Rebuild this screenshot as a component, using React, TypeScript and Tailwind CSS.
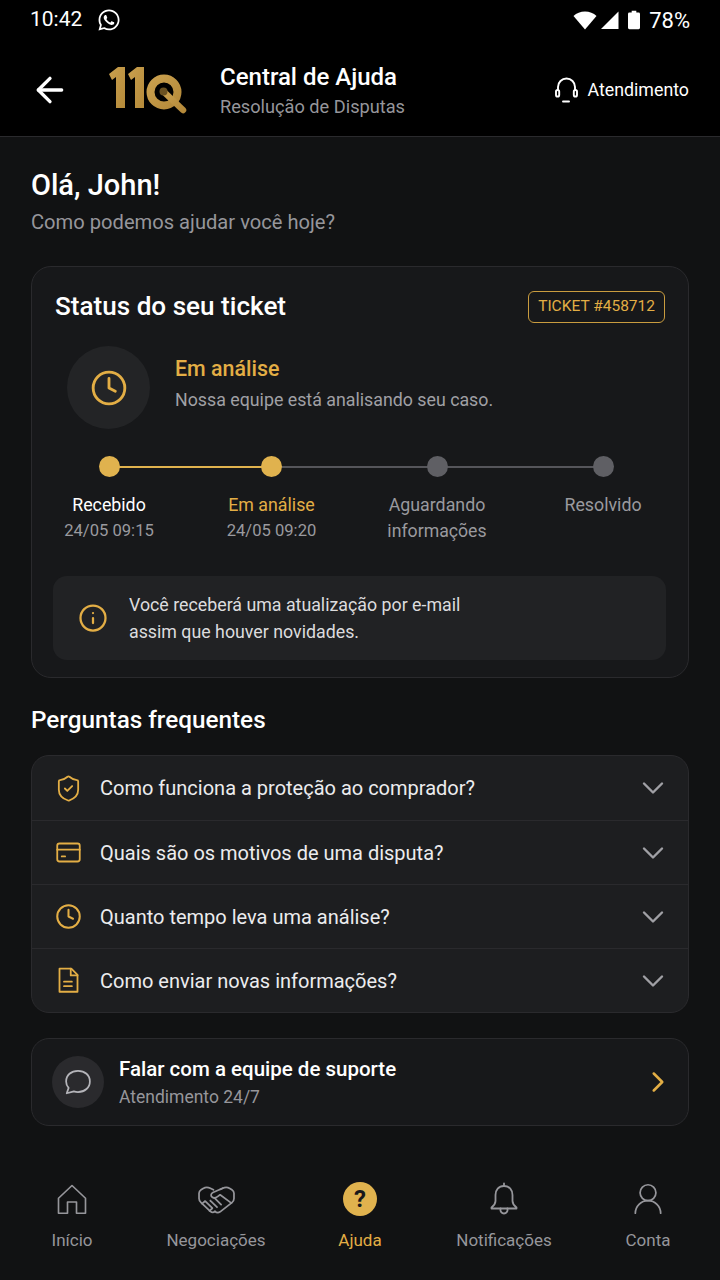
import { ArrowLeft, ChevronDown, ChevronRight, Clock, Info, ShieldCheck, UserRound } from "lucide-react";
import { FaWhatsapp } from "react-icons/fa";

const steps = [
  { title: "Recebido", sub: "24/05 09:15", titleClass: "text-white", subClass: "text-[#9a9a9f] text-[16.600px]", dot: "bg-[#e0b24e]" },
  { title: "Em análise", sub: "24/05 09:20", titleClass: "text-[#e3ae45]", subClass: "text-[#9a9a9f] text-[16.600px]", dot: "bg-[#e0b24e]" },
  { title: "Aguardando", sub: "informações", titleClass: "text-[#9a9a9f]", subClass: "text-[#9a9a9f] text-[17.700px]", dot: "bg-[#5f5f64]" },
  { title: "Resolvido", sub: "", titleClass: "text-[#9a9a9f]", subClass: "", dot: "bg-[#5f5f64]" },
];

const CardIcon = () => (
  <svg width="27" height="27" viewBox="0 0 24 24" fill="none" stroke="#e3ae45" strokeWidth="1.600" strokeLinecap="round" strokeLinejoin="round">
    <rect x="2" y="4" width="20" height="16" rx="2" />
    <path d="M2 9.500h20" />
    <path d="M6 15.500h3" />
  </svg>
);

const ClockIcon = () => <Clock size={27} strokeWidth={1.8} className="text-[#e3ae45]" />;

const DocIcon = () => (
  <svg width="27" height="27" viewBox="0 0 24 24" fill="none" stroke="#e3ae45" strokeWidth="1.600" strokeLinecap="round" strokeLinejoin="round">
    <path d="M4 1.500h10.500l5.500 5.500v15H4z" />
    <path d="M14 1.500V7.500h6" />
    <path d="M8 13h7" />
    <path d="M8 17h7" />
  </svg>
);

const ShieldIcon = () => (
  <div className="w-[27px] flex justify-center">
    <ShieldCheck size={29} strokeWidth={1.5} className="text-[#e3ae45] shrink-0" />
  </div>
);

const faqs = [
  { icon: <ShieldIcon />, text: "Como funciona a proteção ao comprador?" },
  { icon: <CardIcon />, text: "Quais são os motivos de uma disputa?" },
  { icon: <ClockIcon />, text: "Quanto tempo leva uma análise?" },
  { icon: <DocIcon />, text: "Como enviar novas informações?" },
];

const StatusBar = () => (
  <div className="h-[40px] flex items-center justify-between px-[30px] text-white">
    <div className="flex items-center gap-[15px]">
      <span className="text-[21px]">10:42</span>
      <FaWhatsapp size={24} />
    </div>
    <div className="flex items-center">
      <svg width="24" height="19" viewBox="0 0 24 19" fill="white"><path d="M0.500 5C3.500 2 7.500 0.500 12 0.500S20.500 2 23.500 5L12 18.500z" /></svg>
      <svg className="ml-[4px]" width="18" height="18" viewBox="0 0 18 18" fill="white"><path d="M17.500 0.500V18H0z" /></svg>
      <svg className="ml-[9px]" width="12" height="20" viewBox="0 0 13 20" fill="white"><path d="M4 0h5v2h2.500A1.500 1.500 0 0 1 13 3.500V18.500A1.500 1.500 0 0 1 11.500 20h-10A1.500 1.500 0 0 1 0 18.500V3.500A1.500 1.500 0 0 1 1.500 2H4z" /></svg>
      <span className="ml-[9px] text-[22px]">78%</span>
    </div>
  </div>
);

const Logo = () => (
  <svg width="80" height="48" viewBox="0 0 80 48">
    <defs>
      <linearGradient id="gold" x1="0" y1="0" x2="1" y2="1">
        <stop offset="0" stopColor="#c9a04e" />
        <stop offset="1" stopColor="#b58a3a" />
      </linearGradient>
    </defs>
    <path d="M1 8 L10 1 H17 V42 H8 V11 L4 14z" fill="url(#gold)" />
    <path d="M20 8 L29 1 H36 V42 H27 V11 L23 14z" fill="url(#gold)" />
    <circle cx="56" cy="26" r="13.500" fill="none" stroke="url(#gold)" strokeWidth="8" />
    <path d="M56 26 L75 44" stroke="url(#gold)" strokeWidth="6.500" strokeLinecap="round" />
    <circle cx="55.500" cy="25.500" r="4" fill="#6b5222" />
  </svg>
);

const Header = () => (
  <div className="h-[97px] border-b border-[#2a2a2d] flex items-center pt-[4px] pl-[30px] pr-[31px]">
    <ArrowLeft size={40} strokeWidth={2} className="text-white" />
    <div className="ml-[38px] mt-[-1px]"><Logo /></div>
    <div className="ml-[32px] flex-1 mt-[1px]">
      <div className="text-white text-[24px] leading-[30px] font-medium">Central de Ajuda</div>
      <div className="text-[#96969b] text-[18.200px] leading-[26px] mt-[2px]">Resolução de Disputas</div>
    </div>
    <div className="flex items-center gap-[9px] text-white text-[17.800px]">
      <svg width="25" height="26" viewBox="0 0 25 26" fill="none" stroke="white" strokeWidth="1.900" strokeLinecap="round">
        <path d="M4 13V10a8.500 8.500 0 0 1 17 0v3" />
        <rect x="2" y="13" width="3.200" height="6.500" rx="1.600" />
        <rect x="19.800" y="13" width="3.200" height="6.500" rx="1.600" />
        <path d="M9 24.500h6" />
      </svg>
      <span>Atendimento</span>
    </div>
  </div>
);

const TicketCard = () => (
  <div className="mt-[30px] h-[412px] rounded-[20px] border border-[#2a2a2d] bg-[#17181a] px-[23px] pt-[23px]">
    <div className="h-[32px] flex items-center justify-between">
      <h2 className="text-white text-[26.100px] leading-[32px] font-medium">Status do seu ticket</h2>
      <span className="mt-[2px] h-[32px] px-[9px] flex items-center rounded-[6px] border border-[#c99c3f] text-[#e3ae45] text-[15.500px]">TICKET #458712</span>
    </div>
    <div className="mt-[24px] ml-[12px] flex items-center">
      <div className="w-[83px] h-[83px] rounded-full bg-[#232426] flex items-center justify-center">
        <Clock size={38} strokeWidth={1.8} className="text-[#e3ae45]" />
      </div>
      <div className="ml-[25px] mt-[-7px]">
        <div className="text-[#e3ae45] text-[21.400px] leading-[28px] font-medium">Em análise</div>
        <div className="text-[#a0a0a5] text-[17.800px] leading-[26px] mt-[4px]">Nossa equipe está analisando seu caso.</div>
      </div>
    </div>
    <div className="mt-[27px] ml-[-27px] w-[657px] relative grid grid-cols-[162px_163px_168px_164px]">
      <div className="absolute left-[81px] top-[10px] w-[163px] h-[2px] bg-[#e0b24e]" />
      <div className="absolute left-[244px] top-[10px] w-[331px] h-[2px] bg-[#55555a]" />
      {steps.map((s) => (
        <div key={s.title} className="relative flex flex-col items-center">
          <div className={`w-[21px] h-[21px] rounded-full ${s.dot}`} />
          <div className={`mt-[14px] text-[17.800px] leading-[27px] ${s.titleClass}`}>{s.title}</div>
          <div className={`leading-[26px] ${s.subClass}`}>{s.sub}</div>
        </div>
      ))}
    </div>
    <div className="mt-[32px] ml-[-2px] mr-[-1px] h-[84px] rounded-[14px] bg-[#212224] flex items-center pl-[25px]">
      <Info size={30} strokeWidth={1.8} className="text-[#e3ae45]" />
      <div className="ml-[21px] text-[#dcdcde] text-[17.800px] leading-[27px]">
        Você receberá uma atualização por e-mail<br />assim que houver novidades.
      </div>
    </div>
  </div>
);

const Faq = () => (
  <div className="mt-[19px] rounded-[18px] border border-[#2a2a2d] bg-[#1d1e20] overflow-hidden">
    {faqs.map((f, i) => (
      <div key={f.text} className={`h-[64px] flex items-center pl-[23px] pr-[17px] ${i > 0 ? "border-t border-[#2a2a2d]" : ""}`}>
        {f.icon}
        <span className="ml-[18px] flex-1 text-[#ececee] text-[20px]">{f.text}</span>
        <ChevronDown size={36} strokeWidth={1.6} className="text-[#a0a0a5]" />
      </div>
    ))}
  </div>
);

const SupportCard = () => (
  <div className="mt-[25px] h-[88px] rounded-[18px] border border-[#2a2a2d] bg-[#17181a] flex items-center pl-[20px] pr-[13px]">
    <div className="w-[52px] h-[52px] rounded-full bg-[#2a2a2d] flex items-center justify-center">
      <svg width="30" height="30" viewBox="0 0 24 24" fill="none" stroke="#b5b5ba" strokeWidth="1.400" strokeLinejoin="round">
        <path d="M12 3c5.500 0 9.500 3.600 9.500 8.500S17.500 20 12 20c-1.200 0-2.300-.2-3.300-.5L3 21l1.500-4.300C3.200 15.300 2.500 13.500 2.500 11.500 2.500 6.600 6.500 3 12 3z" />
      </svg>
    </div>
    <div className="ml-[15px] flex-1 mt-[1px]">
      <div className="text-white text-[20.500px] leading-[28px] font-medium">Falar com a equipe de suporte</div>
      <div className="text-[#96969b] text-[17.500px] leading-[26px] mt-[1px]">Atendimento 24/7</div>
    </div>
    <ChevronRight size={34} strokeWidth={1.8} className="text-[#e3ae45]" />
  </div>
);

const TabItem = ({ label, children, active }: { label: string; children: React.ReactNode; active?: boolean }) => (
  <div className="w-[144px] flex flex-col items-center">
    <div className="h-[38px] flex items-center justify-center">{children}</div>
    <span className={`mt-[10px] text-[17px] leading-[24px] ${active ? "text-[#e3ae45]" : "text-[#96969b]"}`}>{label}</span>
  </div>
);

const BottomNav = () => (
  <div className="mt-[54px] flex">
    <TabItem label="Início">
      <svg width="36" height="36" viewBox="0 0 24 24" fill="none" stroke="#96969b" strokeWidth="1.100" strokeLinejoin="round">
        <path d="M3 11.500 12 3l9 8.500V21.500h-6V14H9v7.500H3z" />
      </svg>
    </TabItem>
    <TabItem label="Negociações">
      <svg width="37" height="29" viewBox="0 0 36 28" fill="none" stroke="#96969b" strokeWidth="1.700" strokeLinecap="round" strokeLinejoin="round">
        <path d="M15 4.500 12 3C9.500 1.800 7 2 5 3.200L3 4.500C1.500 5.500 1 6.500 1 8v5c0 1.700.8 3 2 4l9 8.500c1.500 1.300 3.200 1.300 4.500 0" />
        <path d="M16.500 25.500c1.500 1.500 3.500 1.500 5 .5L33 17c1.300-1 2-2.300 2-4V8c0-1.500-.5-2.500-2-3.500l-2-1.300C29 2 26.500 1.800 24 3l-2.500 1.200" />
        <path d="M24 3 14.500 7.200c-2 1-2.300 3-1 4.300 1.500 1.500 3.500 1.200 5.500-.3l2.500-1.800L32.500 17.500" />
        <path d="M4 18 7 15.500l7 7-2.800 2.500" />
        <path d="M12 15l6.500 6.500" />
        <path d="M16 12.500l6.500 6.500" />
      </svg>
    </TabItem>
    <TabItem label="Ajuda" active>
      <div className="w-[34px] h-[34px] rounded-full bg-[#e0b24e] flex items-center justify-center text-[#18181b] text-[24px] font-bold">?</div>
    </TabItem>
    <TabItem label="Notificações">
      <svg width="32" height="36" viewBox="0 0 32 36" fill="none" stroke="#96969b" strokeWidth="1.800" strokeLinecap="round" strokeLinejoin="round">
        <path d="M16 2.500v2.500" />
        <path d="M16 5c-5.500 0-8.500 4-8.500 9v6c0 2.500-1.500 4.500-4 6.500v1h25v-1c-2.500-2-4-4-4-6.500v-6c0-5-3-9-8.500-9z" />
        <path d="M12.500 27.500c-.5 3 1.300 5 3.500 5s4-2 3.500-5" />
      </svg>
    </TabItem>
    <TabItem label="Conta"><UserRound size={38} strokeWidth={1.1} className="text-[#96969b]" /></TabItem>
  </div>
);

export default function App() {
  return (
    <div className="w-[720px] h-[1280px] overflow-hidden bg-[#111213] font-['Roboto',sans-serif]">
      <div className="bg-black">
        <StatusBar />
        <Header />
      </div>
      <div className="px-[31px] pt-[30px]">
        <h1 className="text-white text-[29px] leading-[36px] font-medium">Olá, John!</h1>
        <p className="text-[#96969b] text-[20.150px] leading-[28px] mt-[5px]">Como podemos ajudar você hoje?</p>
        <TicketCard />
        <h2 className="mt-[26px] text-white text-[24.300px] leading-[32px] font-medium">Perguntas frequentes</h2>
        <Faq />
        <SupportCard />
      </div>
      <BottomNav />
    </div>
  );
}
